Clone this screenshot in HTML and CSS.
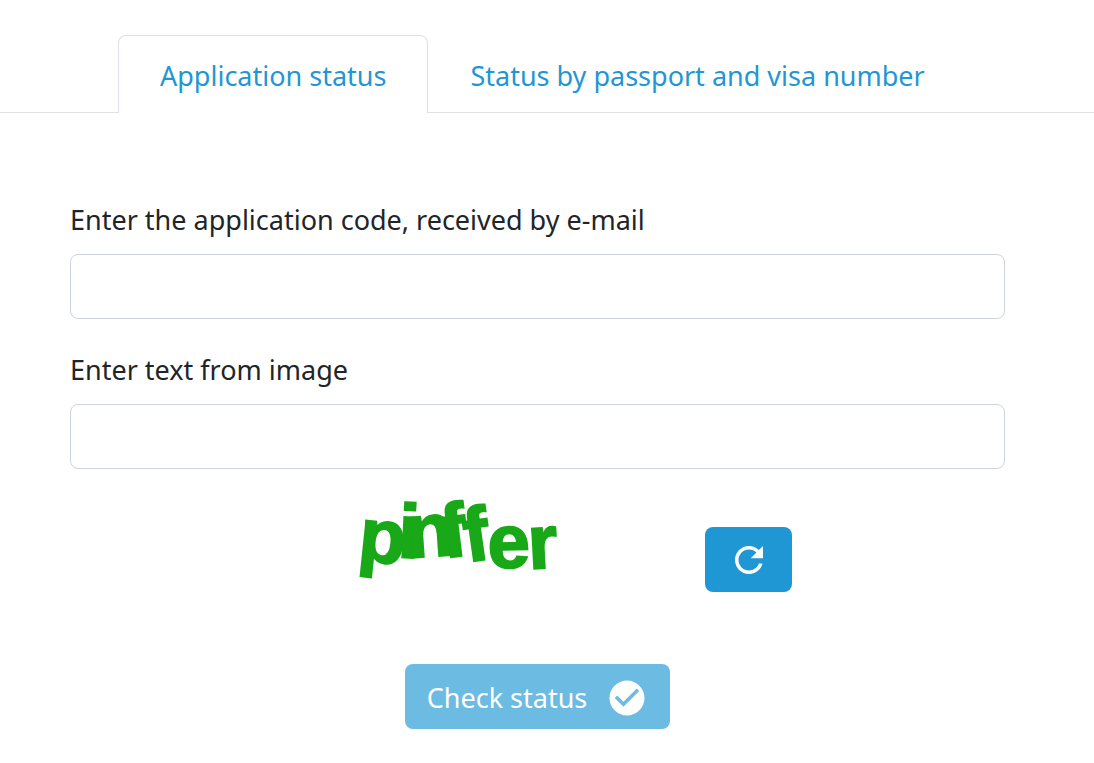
FILE: index.html
```html
<!DOCTYPE html>
<html lang="en">
<head>
  <meta charset="UTF-8">
  <meta name="viewport" content="width=device-width, initial-scale=1.0">
  <title>Application status</title>
  <link rel="stylesheet" href="styles.css">
</head>
<body>
  <nav class="tabs">
    <a class="tab active" href="#application">Application status</a>
    <a class="tab" href="#passport">Status by passport and visa number</a>
  </nav>

  <form id="application" class="status-form">
    <div class="field">
      <label for="code">Enter the application code, received by e-mail</label>
      <input type="text" id="code" name="code">
    </div>
    <div class="field">
      <label for="captcha">Enter text from image</label>
      <input type="text" id="captcha" name="captcha" autocomplete="off">
    </div>

    <div class="captcha-row">
      <svg class="captcha" viewBox="0 0 200 93" role="img">
        <text x="-3 37 48 84 107 128 169" y="61 58 59 59 63 69 70" rotate="6 3 -4 -7 -8 -1 -3">pinffer</text>
      </svg>
      <button type="button" class="btn refresh" aria-label="Refresh">
        <svg class="icon" viewBox="0 0 24 24">
          <path d="M17.65 6.35C16.2 4.9 14.21 4 12 4c-4.42 0-7.99 3.58-7.99 8s3.57 8 7.99 8c3.73 0 6.84-2.55 7.73-6h-2.08c-.82 2.33-3.04 4-5.65 4-3.31 0-6-2.69-6-6s2.69-6 6-6c1.66 0 3.14.69 4.22 1.78L13 11h7V4l-2.35 2.35z"/>
        </svg>
      </button>
    </div>

    <div class="actions">
      <button type="submit" class="btn check" disabled>
        Check status
        <svg class="icon" viewBox="0 0 24 24">
          <path d="M12 2C6.48 2 2 6.48 2 12s4.48 10 10 10 10-4.48 10-10S17.52 2 12 2zm-2 15l-5-5 1.41-1.41L10 14.17l7.59-7.59L19 8l-9 9z"/>
        </svg>
      </button>
    </div>
  </form>
</body>
</html>
```

FILE: styles.css
```css
* {
  box-sizing: border-box;
}
body {
  margin: 0;
  padding-top: 35px;
  font-family: "Segoe UI", "Noto Sans", sans-serif;
  font-size: 27px;
  line-height: 42px;
  color: #212529;
  background-color: #fff;
}
.tabs {
  display: flex;
  padding-left: 118px;
  border-bottom: 1px solid #dee2e6;
}
.tab {
  margin-bottom: -1px;
  padding: 19px 41px 16px;
  border: 1px solid transparent;
  border-bottom: none;
  border-radius: 8px 8px 0 0;
  color: #1f97d4;
  text-decoration: none;
  white-space: nowrap;
}
.tab.active {
  border-color: #dee2e6;
  background-color: #fff;
}
.status-form {
  padding: 86px 89px 34px 70px;
}
.field {
  margin-bottom: 30px;
}
.field label {
  display: block;
  margin-bottom: 13px;
}
.field input {
  display: block;
  width: 100%;
  height: 65px;
  padding: 10px 20px;
  border: 1px solid #ced4da;
  border-radius: 8px;
  font: inherit;
  color: inherit;
}
.captcha-row {
  display: flex;
  justify-content: center;
  align-items: flex-end;
  gap: 145px;
  padding-left: 77px;
}
.captcha {
  width: 200px;
  height: 93px;
  overflow: visible;
}
.captcha text {
  font: bold 76px "Liberation Sans", Arial, sans-serif;
  fill: #18a818;
  stroke: #18a818;
  stroke-width: 2px;
}
.btn {
  display: flex;
  align-items: center;
  justify-content: center;
  height: 65px;
  border: none;
  border-radius: 8px;
  background-color: #1f97d4;
  color: #fff;
  font: inherit;
  cursor: pointer;
}
.refresh {
  width: 87px;
}
.check {
  gap: 19px;
  padding: 2px 22px 0;
}
.check:disabled {
  opacity: 0.65;
  cursor: default;
}
.icon {
  width: 42px;
  height: 42px;
  fill: currentColor;
}
.actions {
  display: flex;
  justify-content: center;
  margin-top: 72px;
}
```
